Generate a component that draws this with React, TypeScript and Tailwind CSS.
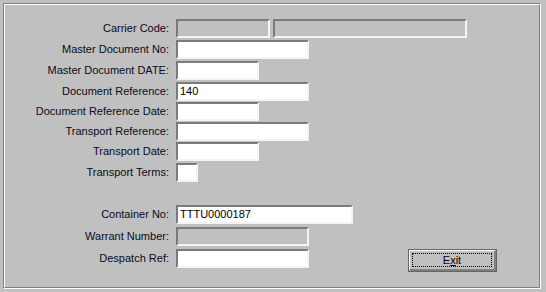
import React from 'react';

interface FieldRow {
    label: string;
    width: string;
    value?: string;
    disabled?: boolean;
    top: string;
}

const ROWS: FieldRow[] = [
    { label: 'Master Document No:', width: 'w-[133px]', top: 'mt-[2px]' },
    { label: 'Master Document DATE:', width: 'w-[83px]', top: 'mt-[2px]' },
    { label: 'Document Reference:', width: 'w-[133px]', value: '140', top: 'mt-[2px]' },
    { label: 'Document Reference Date:', width: 'w-[83px]', top: 'mt-[1px]' },
    { label: 'Transport Reference:', width: 'w-[133px]', top: 'mt-[1px]' },
    { label: 'Transport Date:', width: 'w-[83px]', top: 'mt-[1px]' },
    { label: 'Transport Terms:', width: 'w-[22px]', top: 'mt-[2px]' },
];

const Field = ({ width, value, disabled }: { width: string; value?: string; disabled?: boolean }) => (
    <div
        className={`${width} h-[19px] shrink-0 border-t-2 border-l-2 border-t-[#7b7b7b] border-l-[#7b7b7b] border-b-2 border-r-2 border-b-[#f4f4f4] border-r-[#f4f4f4] pl-[2px] leading-[15px] text-black ${disabled ? 'bg-[#c0c0c0]' : 'bg-white'}`}
    >
        {value}
    </div>
);

const Label = ({ text }: { text: string }) => (
    <div className="w-[163px] shrink-0 text-right leading-[19px] text-[#0a0a1a]">{text}</div>
);

const App = () => {
    return (
        <div className="w-[546px] h-[292px] bg-[#c0c0c0] pt-[3px] pl-[3px] font-['Liberation_Sans',Arial,sans-serif] text-[11px] overflow-hidden">
            {/* etched frame */}
            <div className="w-[538px] h-[286px] border-t border-l border-[#808080] border-b-white border-r-white border-b border-r">
                <div className="w-full h-full border-t border-l border-white border-b border-r border-b-[#808080] border-r-[#808080] pt-[14px] pl-[1px]">
                    <div className="flex items-start gap-[7px]">
                        <Label text="Carrier Code:" />
                        <div className="flex gap-[3px]">
                            <Field width="w-[94px]" disabled />
                            <Field width="w-[194px]" disabled />
                        </div>
                    </div>

                    {ROWS.map((row) => (
                        <div key={row.label} className={`flex items-start gap-[7px] ${row.top}`}>
                            <Label text={row.label} />
                            <Field width={row.width} value={row.value} disabled={row.disabled} />
                        </div>
                    ))}

                    <div className="flex items-start gap-[7px] mt-[23px]">
                        <Label text="Container No:" />
                        <Field width="w-[177px]" value="TTTU0000187" />
                    </div>
                    <div className="flex items-start gap-[7px] mt-[3px]">
                        <Label text="Warrant Number:" />
                        <Field width="w-[133px]" disabled />
                    </div>
                    <div className="flex items-start gap-[7px] mt-[3px]">
                        <Label text="Despatch Ref:" />
                        <Field width="w-[133px]" />
                        <button className="ml-[92px] w-[89px] h-[23px] border border-[#646464] bg-[#c0c0c0] p-0">
                            <div className="w-full h-full border-t border-l border-white border-b-2 border-r-2 border-b-[#808080] border-r-[#808080] p-[2px]">
                                <div className="w-full h-full border border-dotted border-black flex items-center justify-center text-black leading-none">
                                    <span>
                                        E<u>x</u>it
                                    </span>
                                </div>
                            </div>
                        </button>
                    </div>
                </div>
            </div>
        </div>
    );
};

export default App;
